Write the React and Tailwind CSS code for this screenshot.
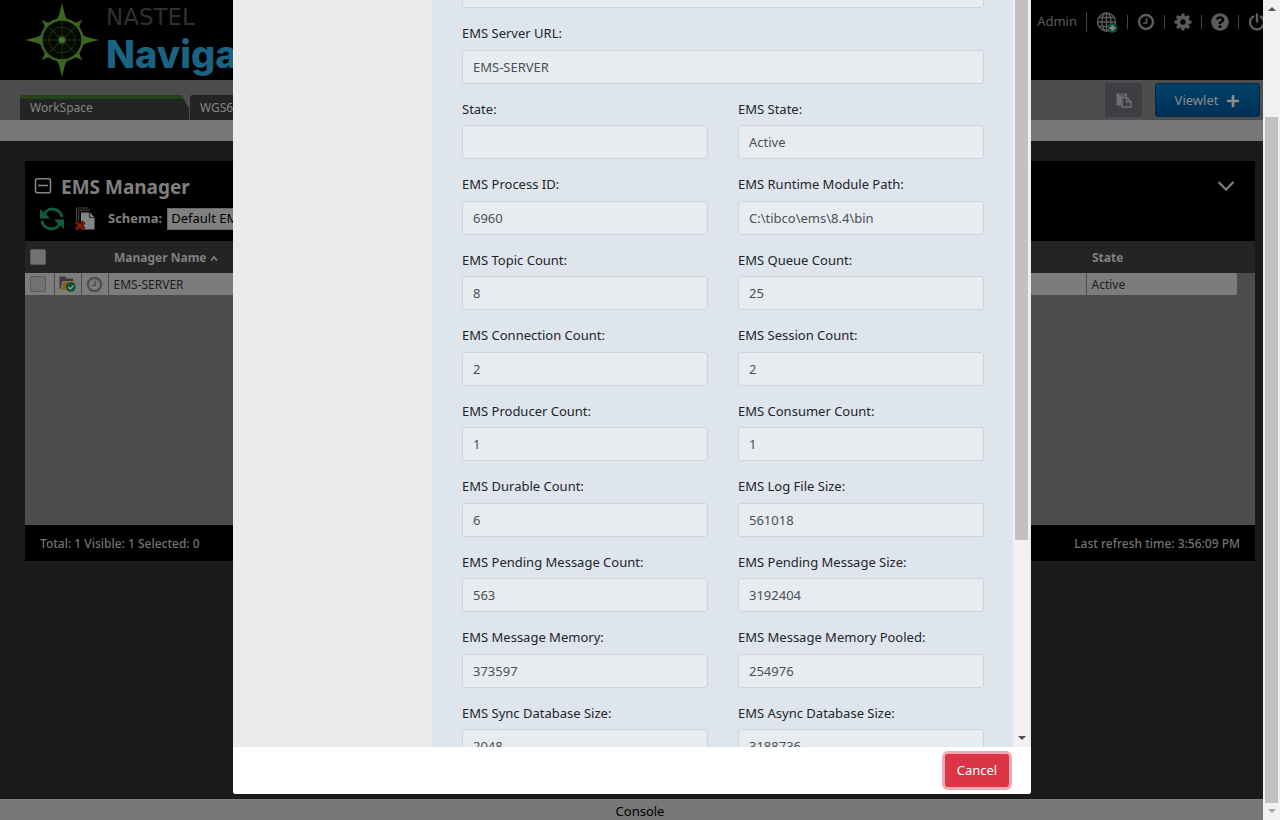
import React from "react";
import { FaPlus, FaQuestionCircle } from "react-icons/fa";

const rows = [
  [["State:", ""], ["EMS State:", "Active"]],
  [["EMS Process ID:", "6960"], ["EMS Runtime Module Path:", "C:\\tibco\\ems\\8.4\\bin"]],
  [["EMS Topic Count:", "8"], ["EMS Queue Count:", "25"]],
  [["EMS Connection Count:", "2"], ["EMS Session Count:", "2"]],
  [["EMS Producer Count:", "1"], ["EMS Consumer Count:", "1"]],
  [["EMS Durable Count:", "6"], ["EMS Log File Size:", "561018"]],
  [["EMS Pending Message Count:", "563"], ["EMS Pending Message Size:", "3192404"]],
  [["EMS Message Memory:", "373597"], ["EMS Message Memory Pooled:", "254976"]],
  [["EMS Sync Database Size:", "2048"], ["EMS Async Database Size:", "3188736"]],
];

function Field({ label, value, className = "" }) {
  const id = label.toLowerCase().replace(/[^a-z]+/g, "-");
  return (
    <div className={className}>
      <label htmlFor={id} className="mb-[6px] block text-[13px] leading-normal text-[#212529]">
        {label}
      </label>
      <input
        id={id}
        readOnly
        defaultValue={value}
        className="block h-[34px] w-full rounded-[3px] border border-[#ced4da] bg-[#e8ecef] px-[10px] text-[13px] text-[#495057] outline-none"
      />
    </div>
  );
}

function Compass() {
  return (
    <svg viewBox="0 0 76 76" className="mt-[2px] h-[76px] w-[76px] shrink-0" aria-hidden="true">
      <g fill="#3b6620">
        {[0, 90, 180, 270].map((a) => (
          <path key={a} transform={`rotate(${a} 38 38)`} d="M38 1 L41 13 Q42 17 46 19 L30 19 Q34 17 35 13 Z" />
        ))}
        {[45, 135, 225, 315].map((a) => (
          <path key={a} transform={`rotate(${a} 38 38)`} d="M38 9 L39.5 14 L42 18 L34 18 L36.5 14 Z" />
        ))}
      </g>
      <circle cx="38" cy="38" r="20.5" fill="#050903" stroke="#3b6620" strokeWidth="2.4" />
      <g stroke="#1b3010" strokeWidth="1" fill="none">
        <circle cx="38" cy="38" r="13" />
        {[0, 45, 90, 135].map((a) => (
          <path key={a} transform={`rotate(${a} 38 38)`} d="M38 19 V57" />
        ))}
      </g>
      <circle cx="38" cy="38" r="5" fill="#1b3010" />
      <circle cx="38" cy="38" r="3" fill="#47792a" />
    </svg>
  );
}

function Clock({ className }) {
  return (
    <svg viewBox="0 0 18 18" className={className} fill="none" stroke="currentColor" aria-hidden="true">
      <circle cx="9" cy="9" r="7" strokeWidth="2.4" />
      <path d="M9.5 5 V10 H6" strokeWidth="1.6" />
    </svg>
  );
}

function Gear({ className }) {
  return (
    <svg viewBox="0 0 18 18" className={className} aria-hidden="true">
      <g fill="currentColor">
        {[0, 45, 90, 135].map((a) => (
          <path key={a} transform={`rotate(${a} 9 9)`} d="M7.6 0.5 H10.4 L11 4 V14 L10.4 17.5 H7.6 L7 14 V4 Z" />
        ))}
        <circle cx="9" cy="9" r="6.2" />
      </g>
      <circle cx="9" cy="9" r="2.7" fill="#000" />
    </svg>
  );
}

function GlobeAdd() {
  return (
    <svg viewBox="0 0 22 22" className="h-[22px] w-[22px]" fill="none" aria-hidden="true">
      <g stroke="#5c5c5c" strokeWidth="1.4">
        <circle cx="10.5" cy="11" r="9" />
        <ellipse cx="10.5" cy="11" rx="4.6" ry="9" />
        <path d="M10.5 2 V20 M1.5 11 H19.5 M3 6.5 H18 M3 15.5 H18" />
      </g>
      <circle cx="16.5" cy="17" r="4.8" fill="#0f573a" />
      <path d="M16.5 14.2 V19.8 M13.7 17 H19.3" stroke="#8a8a8a" strokeWidth="2" />
    </svg>
  );
}

function Power() {
  return (
    <svg viewBox="0 0 18 18" className="h-[18px] w-[18px]" fill="none" stroke="currentColor" strokeWidth="2.4" strokeLinecap="round" aria-hidden="true">
      <path d="M5.2 3.6 A7 7 0 1 0 12.8 3.6 M9 1.5 V8.5" />
    </svg>
  );
}

function PasteIcon() {
  return (
    <svg viewBox="0 0 16 15" className="h-[15px] w-4" aria-hidden="true">
      <path d="M0.5 0.5 H11 V12.5 H0.5 Z" fill="#707070" />
      <path d="M3 2 H8.5" stroke="#3c3e43" strokeWidth="1" />
      <path d="M5 3.5 H11.5 L16 8 V15 H5 Z" fill="#3c3e43" />
      <path d="M6 4.5 H10.8 L15 8.8 V14 H6 Z" fill="#3c3e43" stroke="#707070" strokeWidth="1.5" />
      <path d="M10.5 4.5 V9 H15" fill="none" stroke="#707070" strokeWidth="1.3" />
    </svg>
  );
}

function Refresh() {
  return (
    <svg viewBox="0 0 24 24" className="h-6 w-6" aria-hidden="true">
      <g fill="none" stroke="#105c40" strokeWidth="3">
        <path d="M3.5 8.5 A9.6 9.6 0 0 1 22 10" />
        <path d="M20.5 15.5 A9.6 9.6 0 0 1 2 14" />
      </g>
      <path d="M0 2 L0 11.5 L10 11.5 L6.5 8 L3.5 5.5 Z" fill="#105c40" />
      <path d="M24 22 L24 12.5 L14 12.5 L17.5 16 L20.5 18.5 Z" fill="#105c40" />
    </svg>
  );
}

function ClearPages() {
  return (
    <svg viewBox="0 0 21 24" className="h-6 w-[21px]" aria-hidden="true">
      <path d="M1.5 14 V1 H13 M3.7 15 V3.2 H15" fill="none" stroke="#4a4a4a" strokeWidth="1" />
      <path d="M6 5.5 H15 L19.5 10.5 V22.5 H6 Z" fill="#858585" />
      <path d="M14.5 5.5 V10.5 H19.5" fill="none" stroke="#333" strokeWidth="1.2" />
      <path d="M1 15 L9 22.5 M9 15 L1 22.5" stroke="#000" strokeWidth="4.2" />
      <path d="M1 15 L9 22.5 M9 15 L1 22.5" stroke="#8a1508" strokeWidth="3" />
    </svg>
  );
}

function FolderOk() {
  return (
    <svg viewBox="0 0 17 16" className="h-4 w-[17px]" aria-hidden="true">
      <path d="M0.5 13 V0.5 H6 L7.5 2.5 H14 V5 H3.5 L1.5 13 Z" fill="#383b38" />
      <path d="M4.5 5.5 H16 L13.5 14 H2 Z" fill="#8a6426" />
      <circle cx="11.8" cy="11" r="4.8" fill="#0c5238" />
      <path d="M9.3 11 L11.3 13 L14.6 9.4" fill="none" stroke="#999" strokeWidth="1.5" />
    </svg>
  );
}

function Triangle({ up = false, color = "#505050" }) {
  return (
    <svg viewBox="0 0 8 4" className="h-1 w-2" aria-hidden="true">
      <path d={up ? "M0 4 L4 0 L8 4 Z" : "M0 0 L4 4 L8 0 Z"} fill={color} />
    </svg>
  );
}

const Divider = ({ tall }) => <span className={tall ? "h-5 w-px bg-[#454545]" : "h-[14px] w-px bg-[#454545]"} />;

function Tick({ label }) {
  return (
    <input
      type="checkbox"
      aria-label={label}
      className="block h-4 w-4 appearance-none rounded-[2px] border border-[#5a5a5a] bg-[#727272]"
    />
  );
}

export default function App() {
  return (
    <div className="relative flex h-screen overflow-hidden bg-[#1a1a1a] font-['Noto_Sans',sans-serif] text-[13px]">
      <div className="flex min-w-0 flex-1 flex-col">
        <header className="flex h-20 shrink-0 justify-between bg-black pl-6">
          <div className="flex items-start gap-[6px]">
            <Compass />
            <div className="flex flex-col pt-1">
              <span className="font-['DejaVu_Sans',sans-serif] text-[23px] leading-[27px] text-[#303030]">NASTEL</span>
              <span className="font-['Inter',sans-serif] text-[38px] leading-[46px] font-extrabold text-[#1a6482]">Navigator</span>
            </div>
          </div>
          <nav className="-mr-[3px] flex h-11 items-center gap-[9px] text-[#5c5c5c]">
            <span>Admin</span>
            <Divider tall />
            <button aria-label="Add site"><GlobeAdd /></button>
            <Divider />
            <button aria-label="History"><Clock className="h-[18px] w-[18px]" /></button>
            <Divider />
            <button aria-label="Settings"><Gear className="h-[18px] w-[18px]" /></button>
            <Divider />
            <button aria-label="Help"><FaQuestionCircle className="h-[18px] w-[18px]" /></button>
            <Divider />
            <button aria-label="Log out"><Power /></button>
          </nav>
        </header>

        <div className="flex h-10 shrink-0 items-start justify-between bg-[#4d4d4d] pr-[3px] pl-5">
          <div className="flex gap-px pt-[15px] text-[12px] text-[#858585]">
            <button className="relative flex h-[25px] w-[169px] items-center rounded-tl-[3px] border-t-4 border-[#25421a] bg-[#242424] pb-1 pl-[10px]">
              WorkSpace
              <svg viewBox="0 0 7 14" className="absolute -top-1 right-0 h-[14px] w-[7px]" aria-hidden="true">
                <path d="M0 0 H7 V14 Z" fill="#4d4d4d" />
              </svg>
            </button>
            <button className="flex h-[25px] w-[169px] items-center rounded-tl-[3px] bg-[#242424] pl-[10px]">WGS6</button>
          </div>
          <div className="flex gap-[13px] pt-[3px]">
            <button aria-label="Paste" className="flex h-[34px] w-[37px] items-center justify-center rounded-[3px] bg-[#3c3e43]">
              <PasteIcon />
            </button>
            <button className="flex h-[34px] w-[105px] items-center justify-center gap-2 rounded-[3px] border border-[#002b48] bg-linear-to-b from-[#004268] to-[#002f57] pt-px text-[#8c8c8c]">
              Viewlet <FaPlus className="h-[14px] w-[14px]" />
            </button>
          </div>
        </div>
        <div className="h-[21px] shrink-0 bg-[#777]" />

        <main className="flex-1 pt-5 pr-2 pl-[25px]">
          <section className="flex h-[400px] flex-col bg-[#4d4d4d]">
            <div className="flex h-20 shrink-0 justify-between bg-black px-[9px] pt-[14px]">
              <div>
                <div className="flex items-center gap-[9px]">
                  <svg viewBox="0 0 18 18" className="h-[18px] w-[18px]" fill="none" stroke="#858585" strokeWidth="1.6" aria-hidden="true">
                    <rect x="1.5" y="0.8" width="15" height="14" rx="2" />
                    <path d="M4 7.5 H14" />
                  </svg>
                  <h2 className="text-[19px] leading-6 font-bold text-[#808080]">EMS Manager</h2>
                </div>
                <div className="mt-2 flex items-center pl-[6px]">
                  <button aria-label="Refresh"><Refresh /></button>
                  <button aria-label="Clear" className="ml-[11px]"><ClearPages /></button>
                  <label htmlFor="schema" className="ml-3 font-bold text-[#808080]">Schema:</label>
                  <select id="schema" className="ml-[5px] h-[22px] w-40 appearance-none border border-[#666] bg-[#808080] px-[3px] text-[13px] text-black">
                    <option>Default EMS Schema</option>
                  </select>
                </div>
              </div>
              <svg viewBox="0 0 18 10" className="mt-[6px] mr-[11px] h-[10px] w-[18px]" fill="none" stroke="#808080" strokeWidth="2.2" aria-hidden="true">
                <path d="M1.5 1 L9 8.5 L16.5 1" />
              </svg>
            </div>
            <table className="w-full table-fixed border-collapse text-left">
              <colgroup>
                <col className="w-[29px]" />
                <col className="w-[27px]" />
                <col className="w-[27px]" />
                <col />
                <col className="w-[151px]" />
                <col className="w-[18px]" />
              </colgroup>
              <thead>
                <tr className="h-8 bg-[#242424] text-[#808080]">
                  <th className="pl-[5px]"><Tick label="Select all" /></th>
                  <th /><th />
                  <th className="pt-[2px] pl-[6px] text-[12px] font-bold">
                    <span className="inline-flex items-center gap-[3px]">
                      Manager Name
                      <svg viewBox="0 0 8 5" className="h-[5px] w-2" fill="none" stroke="#808080" strokeWidth="1.8" aria-hidden="true">
                        <path d="M1 4.5 L4 1 L7 4.5" />
                      </svg>
                    </span>
                  </th>
                  <th className="pt-[2px] pl-[6px] text-[12px] font-bold">State</th>
                  <th />
                </tr>
              </thead>
              <tbody>
                <tr className="h-[22px] bg-[#7c7c7c] text-[12px] text-[#1c1c1c]">
                  <td className="pl-[5px]"><Tick label="Select EMS-SERVER" /></td>
                  <td className="border-l border-[#4d4d4d] pl-1"><FolderOk /></td>
                  <td className="border-l border-[#4d4d4d] pl-1 text-[#4f4f4f]"><Clock className="h-[17px] w-[17px]" /></td>
                  <td className="border-l border-[#4d4d4d] pt-px pl-[5px]">EMS-SERVER</td>
                  <td className="border-l border-[#4d4d4d] pt-px pl-[5px]">Active</td>
                  <td className="bg-[#4d4d4d]" />
                </tr>
              </tbody>
            </table>
            <div className="mt-auto flex h-9 items-center justify-between bg-black px-[15px] pt-px text-[12px] font-medium text-[#747474]">
              <span>Total: 1 Visible: 1 Selected: 0</span>
              <span>Last refresh time: 3:56:09 PM</span>
            </div>
          </section>
        </main>

        <footer className="flex h-[21px] shrink-0 items-center justify-center border-t border-[#808080] bg-[#777] pt-[3px] pl-[17px] text-black">
          Console
        </footer>
      </div>

      <div aria-hidden="true" className="z-10 flex w-[17px] shrink-0 flex-col items-center justify-between bg-[#f1f1f1] py-[7px]">
        <Triangle up />
        <div className="mt-[106px] w-[13px] flex-1 bg-[#c1c1c1]" />
        <div className="mt-[6px] flex"><Triangle color="#a3a3a3" /></div>
      </div>

      <div className="absolute inset-y-0 right-4 left-0 flex justify-center pb-[26px]">
        <div role="dialog" aria-label="EMS Manager properties" className="flex w-[798px] flex-col overflow-hidden rounded-b-[3px] bg-white">
          <div className="flex min-h-0 flex-1 overflow-hidden">
            <div className="w-[199px] shrink-0 bg-[#ebebeb]" />
            <form className="flex min-w-0 flex-1 flex-col overflow-hidden bg-[#dfe5ed] pr-[29px] pl-[30px]">
              <div className="-mt-[26px] grid grid-cols-2 gap-x-[30px] gap-y-4">
                <input
                  readOnly
                  aria-label="EMS Server Name"
                  className="col-span-2 block h-[34px] w-full rounded-[3px] border border-[#ced4da] bg-[#e8ecef]"
                />
                <Field label="EMS Server URL:" value="EMS-SERVER" className="col-span-2" />
                {rows.flat().map(([label, value]) => (
                  <Field key={label} label={label} value={value} />
                ))}
              </div>
            </form>
            <div aria-hidden="true" className="flex w-[18px] shrink-0 flex-col items-center justify-between border-r border-[#e3e9f0] bg-[#f1f1f1] pb-[7px]">
              <div className="h-[540px] w-[13px] bg-[#c1c1c1]" />
              <Triangle />
            </div>
          </div>
          <div className="flex h-[47px] shrink-0 items-center justify-end bg-white pr-[22px]">
            <button className="h-[33px] w-16 rounded-[3px] bg-[#dc3545] pt-px text-[13px] text-white ring-3 ring-[#f1a9b3]">Cancel</button>
          </div>
        </div>
      </div>
    </div>
  );
}
